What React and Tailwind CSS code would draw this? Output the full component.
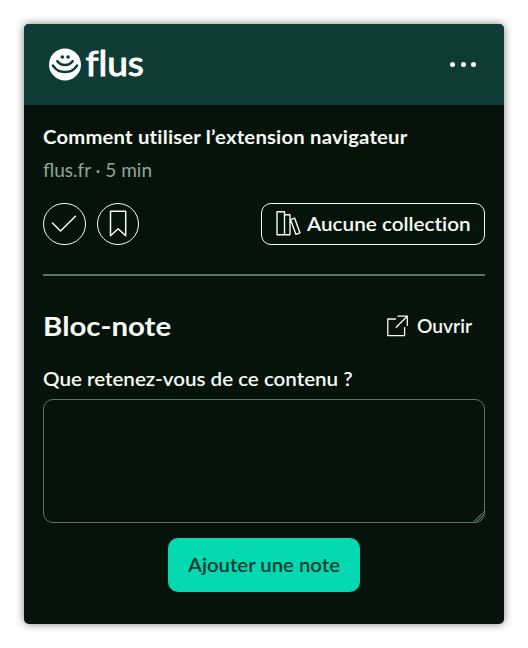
import React from "react";

function Logo() {
  return (
    <div className="flex h-[36px] items-center">
      <svg width="34" height="36" viewBox="0 0 34 36" aria-hidden="true">
        <circle cx="17" cy="17.5" r="16" fill="#fff" />
        <g fill="#0e3b34">
          <circle cx="14.3" cy="10" r="1.8" />
          <circle cx="20.1" cy="10" r="1.8" />
        </g>
        <g fill="none" stroke="#0e3b34" strokeWidth="2.6" strokeLinecap="round">
          <path d="M9.4 14.2c3.8 5 11.4 5 15.2 0" />
          <path d="M5 18.6c5.4 8.6 18.6 8.6 24 0" />
        </g>
      </svg>
      <svg width="66" height="48" viewBox="0 0 66 48" className="overflow-visible" role="img" aria-label="flus">
        <text
          x="3.4"
          y="34.8"
          textLength="58.5"
          lengthAdjust="spacingAndGlyphs"
          fill="#fff"
          stroke="#fff"
          strokeWidth="1"
          strokeLinejoin="round"
          className="font-['Lato',sans-serif] text-[34px] font-normal [font-variant-ligatures:none]"
        >
          flus
        </text>
      </svg>
    </div>
  );
}

function IconButton({ label, children }) {
  return (
    <button
      aria-label={label}
      className="flex h-[42px] w-[42.5px] items-center justify-center rounded-full border border-[#ecfff5]"
    >
      {children}
    </button>
  );
}

export default function App() {
  return (
    <div className="h-[648px] w-[528px] bg-white p-6 font-['Lato',sans-serif] text-[19px] leading-7 text-[#f7fbf5]">
      <main className="h-[600px] w-[480px] overflow-hidden rounded-[5px] bg-[#06130b] shadow-[0_0_9px_rgba(0,0,0,0.5)]">
        <header className="flex h-[81px] items-center justify-between bg-[#0e3b34] pr-[28px] pl-6">
          <Logo />
          <button aria-label="Menu" className="flex gap-[5.5px]">
            <span className="size-[5px] rounded-full bg-white" />
            <span className="size-[5px] rounded-full bg-white" />
            <span className="size-[5px] rounded-full bg-white" />
          </button>
        </header>
        <div className="px-[19px] pt-[18px]">
          <h1 className="font-bold whitespace-nowrap">
            <span className="inline-block origin-left scale-x-[1.065] tracking-[0.2px]">Comment utiliser l’extension navigateur</span>
          </h1>
          <p className="mt-[5px] whitespace-nowrap text-[#8fa69b]">
            <span className="inline-block">flus.fr · 5 min</span>
          </p>
          <div className="mt-[19px] flex items-center">
            <div className="flex gap-[11px]">
              <IconButton label="Lu">
                <svg width="26" height="20" viewBox="0 0 26 20" fill="none" stroke="currentColor" strokeWidth="1.5" strokeLinecap="round" strokeLinejoin="round">
                  <path d="M1.5 9 9.5 17 24.5 2.2" />
                </svg>
              </IconButton>
              <IconButton label="À lire">
                <svg width="18" height="28" viewBox="0 0 18 28" fill="none" stroke="currentColor" strokeWidth="1.5" strokeLinejoin="round">
                  <path d="M1.5 1.3h15.2v24.4L9.1 18.8 1.5 25.7Z" />
                </svg>
              </IconButton>
            </div>
            <button className="ml-auto flex h-[42px] w-[224px] items-center rounded-[10px] border border-[#ecfff5] pl-[14px] font-semibold whitespace-nowrap">
              <svg className="mr-[6px] shrink-0" width="25" height="26" viewBox="0 0 25 26" fill="none" stroke="currentColor" strokeWidth="1.4" strokeLinejoin="round">
                <path d="M1 .8h7.5v23H1ZM8.5 3.8H14v20H8.5ZM14.6 8.7l4-1.6 5.4 14.8-4 1.5Z" />
              </svg>
              <span className="inline-block origin-left scale-x-[1.09] [font-variant-ligatures:none]">Aucune collection</span>
            </button>
          </div>
          <hr className="mt-[29px] border-t-2 border-[#577568]" />
          <div className="mt-[32px] flex h-[36px] items-center justify-between">
            <h2 className="text-[27px] font-bold whitespace-nowrap">
              <span className="inline-block origin-left scale-x-[1.09]">Bloc-note</span>
            </h2>
            <a className="flex w-[98px] items-center font-semibold">
              <svg className="mr-[9px] shrink-0" width="21" height="22" viewBox="0 0 21 22" fill="none" stroke="currentColor" strokeWidth="1.3" strokeLinejoin="round" strokeLinecap="round">
                <path d="M8.5 4H.8v16.6h16.8v-8M11 1.2h9.3v9.2M20.3 1.2 9.2 12.3" />
              </svg>
              <span className="inline-block origin-left scale-x-[1.01]">Ouvrir</span>
            </a>
          </div>
          <label htmlFor="note" className="mt-[21px] block font-semibold whitespace-nowrap">
            <span className="inline-block origin-left scale-x-[1.082]">Que retenez-vous de ce contenu ?</span>
          </label>
          <textarea
            id="note"
            className="mt-[6px] block h-[124px] w-full resize-none rounded-[10px] border border-[#577568] bg-[linear-gradient(135deg,transparent_50%,#42594f_50%,#42594f_56%,transparent_56%,transparent_63%,#42594f_63%,#42594f_69%,transparent_69%,transparent_76%,#577568_76%,#577568_82%,transparent_82%)] bg-[length:11px_11px] bg-right-bottom bg-no-repeat"
          />
          <button className="mx-auto mt-[15px] flex h-[54px] w-[192px] items-center justify-center rounded-[10px] bg-[#04d8b0] font-semibold whitespace-nowrap text-[#0e3b34]">
            <span className="inline-block scale-x-[1.07]">Ajouter une note</span>
          </button>
        </div>
      </main>
    </div>
  );
}
